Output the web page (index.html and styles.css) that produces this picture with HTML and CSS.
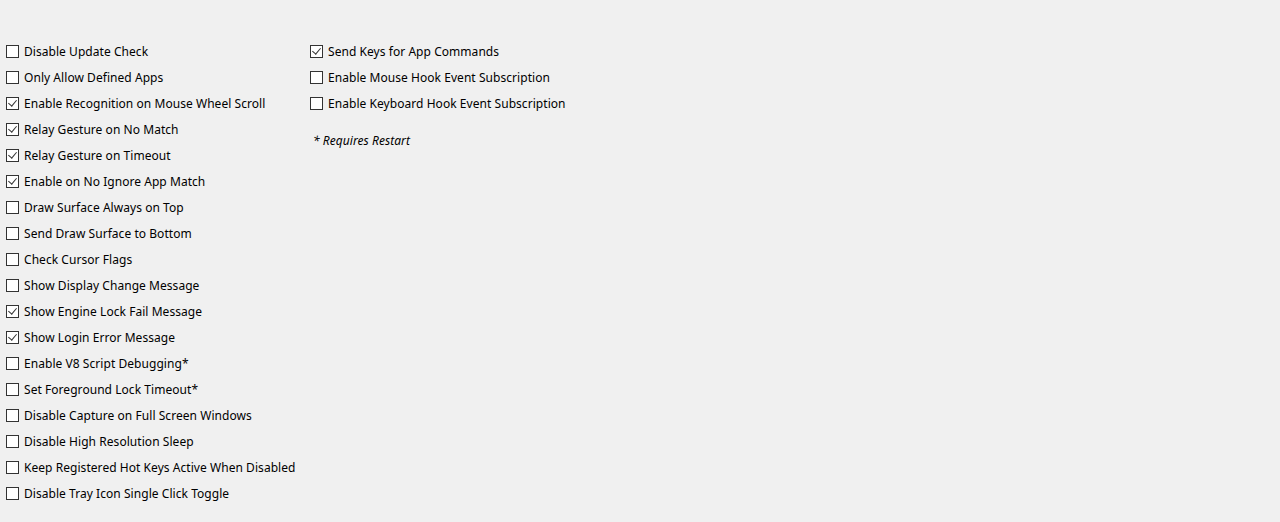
FILE: index.html
```html
<!DOCTYPE html>
<html>
<head>
<meta charset="utf-8">
<link rel="stylesheet" href="styles.css">
</head>
<body>
<div class="page">
  <div class="col col-left">
    <label class="opt"><span class="box"></span><span class="txt">Disable Update Check</span></label>
    <label class="opt"><span class="box"></span><span class="txt">Only Allow Defined Apps</span></label>
    <label class="opt"><span class="box on"></span><span class="txt">Enable Recognition on Mouse Wheel Scroll</span></label>
    <label class="opt"><span class="box on"></span><span class="txt">Relay Gesture on No Match</span></label>
    <label class="opt"><span class="box on"></span><span class="txt">Relay Gesture on Timeout</span></label>
    <label class="opt"><span class="box on"></span><span class="txt">Enable on No Ignore App Match</span></label>
    <label class="opt"><span class="box"></span><span class="txt">Draw Surface Always on Top</span></label>
    <label class="opt"><span class="box"></span><span class="txt">Send Draw Surface to Bottom</span></label>
    <label class="opt"><span class="box"></span><span class="txt">Check Cursor Flags</span></label>
    <label class="opt"><span class="box"></span><span class="txt">Show Display Change Message</span></label>
    <label class="opt"><span class="box on"></span><span class="txt">Show Engine Lock Fail Message</span></label>
    <label class="opt"><span class="box on"></span><span class="txt">Show Login Error Message</span></label>
    <label class="opt"><span class="box"></span><span class="txt">Enable V8 Script Debugging*</span></label>
    <label class="opt"><span class="box"></span><span class="txt">Set Foreground Lock Timeout*</span></label>
    <label class="opt"><span class="box"></span><span class="txt">Disable Capture on Full Screen Windows</span></label>
    <label class="opt"><span class="box"></span><span class="txt">Disable High Resolution Sleep</span></label>
    <label class="opt"><span class="box"></span><span class="txt">Keep Registered Hot Keys Active When Disabled</span></label>
    <label class="opt"><span class="box"></span><span class="txt">Disable Tray Icon Single Click Toggle</span></label>
  </div>
  <div class="col col-right">
    <label class="opt"><span class="box on"></span><span class="txt">Send Keys for App Commands</span></label>
    <label class="opt"><span class="box"></span><span class="txt">Enable Mouse Hook Event Subscription</span></label>
    <label class="opt"><span class="box"></span><span class="txt">Enable Keyboard Hook Event Subscription</span></label>
    <p class="note">* Requires Restart</p>
  </div>
</div>
</body>
</html>
```
FILE: styles.css
```css
html, body {
  margin: 0;
  padding: 0;
  background: #f0f0f0;
  height: 100%;
}
body {
  font-family: "Noto Sans", "Open Sans", sans-serif;
  font-size: 12px;
  letter-spacing: 0.05px;
  color: #000;
}
.page {
  display: grid;
  grid-template-columns: 304px 1fr;
  padding: 38px 0 0 6px;
}
.col {
  display: flex;
  flex-direction: column;
}
.opt {
  display: flex;
  align-items: center;
  height: 26px;
}
.box {
  width: 13px;
  height: 13px;
  box-sizing: border-box;
  border: 1px solid #333;
  background: #fff;
  margin-right: 5px;
  flex: none;
  position: relative;
}
.box.on::after {
  content: "";
  position: absolute;
  left: 3px;
  top: 0px;
  width: 4px;
  height: 7px;
  border: solid #333;
  border-width: 0 1px 1px 0;
  transform: rotate(40deg);
}
.txt {
  white-space: nowrap;
}
.note {
  margin: 16px 0 0 3px;
  font-style: italic;
}
```
